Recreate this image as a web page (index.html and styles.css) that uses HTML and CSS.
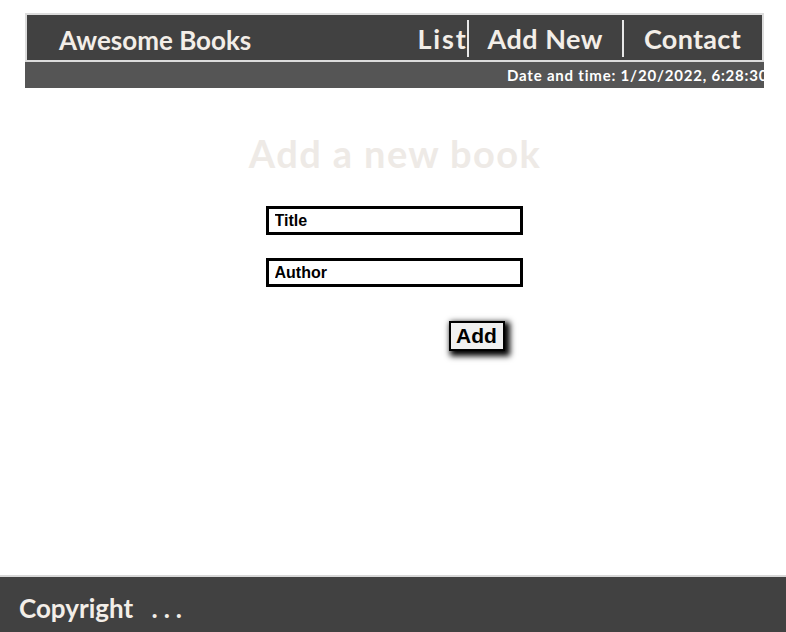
FILE: index.html
```html
<!DOCTYPE html>
<html lang="en">
<head>
<meta charset="utf-8">
<title>Awesome Books</title>
<link rel="stylesheet" href="styles.css">
</head>
<body>
<header class="top">
  <div class="bar">
    <h1 class="logo">Awesome Books</h1>
    <nav class="nav">
      <a class="nav-link nav-first" href="#">List</a>
      <a class="nav-link nav-mid" href="#">Add New</a>
      <a class="nav-link nav-last" href="#">Contact</a>
    </nav>
  </div>
  <div class="date"><span class="date-text">Date and time: 1/20/2022, 6:28:30 PM</span></div>
</header>
<main class="content">
  <h2 class="heading">Add a new book</h2>
  <form class="form">
    <input class="field" type="text" placeholder="Title">
    <input class="field" type="text" placeholder="Author">
    <div class="actions"><button class="add-btn" type="button">Add</button></div>
  </form>
</main>
<footer class="footer">
  <p class="copy">Copyright <span class="dots">...</span></p>
</footer>
</body>
</html>
```
FILE: styles.css
```css
* { box-sizing: border-box; }
html, body { margin: 0; padding: 0; }
body {
  min-height: 100vh;
  display: flex;
  flex-direction: column;
  font-family: "Comic Sans MS", "Lato", "DejaVu Sans", sans-serif;
  background: #fff;
}
.top {
  margin: 13px 22px 0 25px;
}
.bar {
  height: 49px;
  border: 2px solid #dcdcdc;
  background: #414141;
  display: flex;
  align-items: stretch;
  justify-content: space-between;
}
.logo {
  margin: 0;
  padding: 5px 0 0 32px;
  font-size: 26px;
  font-weight: bold;
  color: #f3eee8;
  line-height: 40px;
}
.nav {
  display: flex;
  padding: 5px 21px 3px 0;
}
.nav-link {
  color: #f3eee8;
  text-decoration: none;
  font-size: 27px;
  font-weight: bold;
  line-height: 36px;
  padding-top: 1px;
  letter-spacing: 0.3px;
}
.nav-first { padding-right: 0; border-right: 2px solid #e8e8e8; letter-spacing: 1.8px; }
.nav-mid { padding-left: 18px; padding-right: 19px; border-right: 2px solid #e8e8e8; letter-spacing: 0.5px; }
.nav-last { padding-left: 20px; }
.date {
  height: 26px;
  background: #555;
  overflow: hidden;
  white-space: nowrap;
  padding-left: 482px;
}
.date-text {
  color: #fff;
  font-size: 15px;
  font-weight: bold;
  letter-spacing: 0.8px;
  line-height: 26px;
}
.content {
  flex: 1;
  display: flex;
  flex-direction: column;
  align-items: center;
  padding-top: 40px;
}
.heading {
  margin: 0 0 0 4px;
  font-size: 38px;
  font-weight: bold;
  color: #eeeae6;
  letter-spacing: 1.4px;
  line-height: 50px;
}
.form {
  margin: 28px 0 0 2px;
  display: flex;
  flex-direction: column;
  gap: 23px;
  width: 257px;
}
.field {
  width: 257px;
  height: 29px;
  border: 3px solid #000;
  padding: 0 6px;
  font-family: "Liberation Sans", Arial, sans-serif;
  font-weight: bold;
  font-size: 16px;
  outline: none;
}
.field::placeholder { color: #000; opacity: 1; }
.actions {
  display: flex;
  justify-content: flex-end;
  padding-right: 18px;
  margin-top: 11px;
}
.add-btn {
  width: 56px;
  height: 30px;
  border: 2px solid #000;
  background: #f0f0f0;
  font-family: "Liberation Sans", Arial, sans-serif;
  font-weight: bold;
  font-size: 21px;
  padding: 0;
  box-shadow: 3px 3px 6px 2px #000;
}
.footer {
  height: 57px;
  border-top: 2px solid #d8d8d8;
  background: #414141;
  padding: 4px 0 0 19px;
}
.copy {
  margin: 0;
  color: #f3eee8;
  font-size: 26px;
  font-weight: bold;
  line-height: 54px;
}
.dots {
  margin-left: 12px;
  letter-spacing: 6px;
}
```
